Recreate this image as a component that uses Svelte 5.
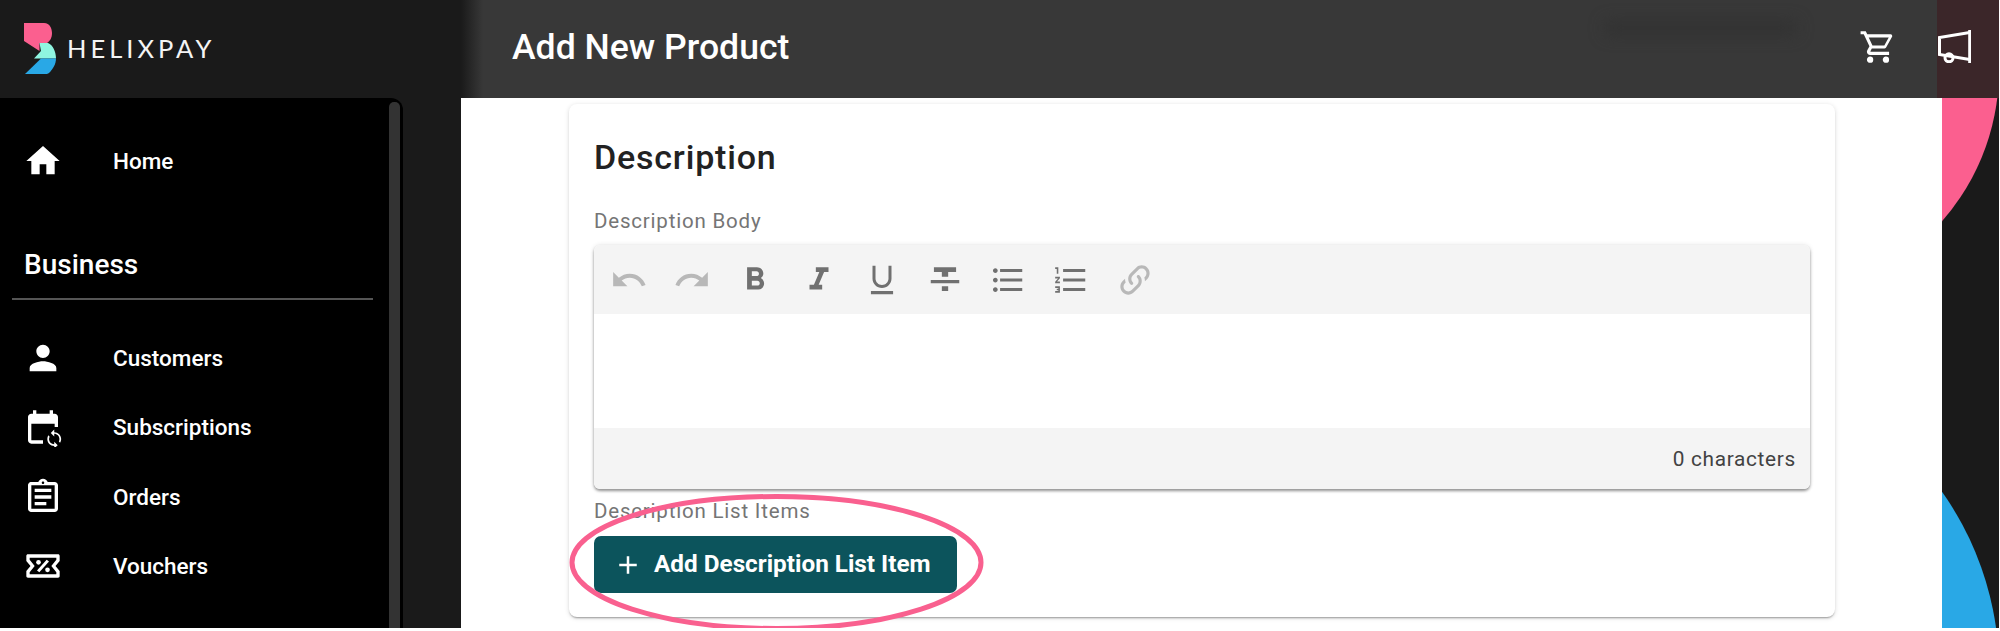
<script>
  const navTop = [{ label: 'Home', path: 'M10 20v-6h4v6h5v-8h3L12 3 2 12h3v8z' }];

  const navBusiness = [
    { label: 'Customers', kind: 'person' },
    { label: 'Subscriptions', kind: 'repeat' },
    { label: 'Orders', kind: 'orders' },
    { label: 'Vouchers', kind: 'voucher' }
  ];

  const tools = [
    { name: 'undo', off: true, d: 'M12.5 8c-2.65 0-5.05.99-6.9 2.6L2 7v9h9l-3.62-3.62c1.39-1.16 3.16-1.88 5.12-1.88 3.54 0 6.55 2.31 7.6 5.5l2.37-.78C21.08 11.03 17.15 8 12.5 8z' },
    { name: 'redo', off: true, d: 'M18.4 10.6C16.55 8.99 14.15 8 11.5 8c-4.65 0-8.58 3.03-9.96 7.22L3.9 16c1.05-3.19 4.05-5.5 7.6-5.5 1.95 0 3.73.72 5.12 1.88L13 16h9V7l-3.6 3.6z' },
    { name: 'bold', d: 'M15.6 10.79c.97-.67 1.65-1.77 1.65-2.79 0-2.26-1.75-4-4-4H7v14h7.04c2.09 0 3.71-1.7 3.71-3.79 0-1.52-.86-2.82-2.15-3.42zM10 6.5h3c.83 0 1.5.67 1.5 1.5s-.67 1.5-1.5 1.5h-3v-3zm3.5 9H10v-3h3.5c.83 0 1.5.67 1.5 1.5s-.67 1.5-1.5 1.5z' },
    { name: 'italic', d: 'M10 4v3h2.21l-3.42 8H6v3h8v-3h-2.21l3.42-8H18V4z' },
    { name: 'underline', d: 'M12 17c3.31 0 6-2.69 6-6V3h-1.900v8c0 2.260-1.840 4.100-4.100 4.100S7.900 13.260 7.900 11V3H6v8c0 3.310 2.690 6 6 6zm-7 2v2h14v-2H5z' },
    { name: 'strike', d: 'M10 19h4v-3h-4v3zM5 4v3h5v3h4V7h5V4H5zM3 14h18v-2H3v2z' },
    { name: 'bullets', d: 'M4 10.5c-.83 0-1.5.67-1.5 1.5s.67 1.5 1.5 1.5 1.5-.67 1.5-1.5-.67-1.5-1.5-1.5zm0-6c-.83 0-1.5.67-1.5 1.5S3.17 7.5 4 7.5 5.5 6.83 5.5 6 4.83 4.5 4 4.5zm0 12c-.83 0-1.5.68-1.5 1.5s.68 1.5 1.5 1.5 1.5-.68 1.5-1.5-.67-1.5-1.5-1.5zM7 19h14v-2H7v2zm0-6h14v-2H7v2zm0-8v2h14V5H7z' },
    { name: 'numbers', d: 'M2 17h2v.5H3v1h1v.5H2v1h3v-4H2v1zm1-9h1V4H2v1h1v3zm-1 3h1.8L2 13.1v.9h3v-1H3.2L5 10.9V10H2v1zm5-6v2h14V5H7zm0 14h14v-2H7v2zm0-6h14v-2H7v2z' },
    { name: 'link', off: true, d: 'M10.59,13.41C11,13.8 11,14.44 10.59,14.83C10.2,15.22 9.56,15.22 9.17,14.83C7.22,12.88 7.22,9.71 9.17,7.76V7.76L12.71,4.22C14.66,2.27 17.83,2.27 19.78,4.22C21.73,6.17 21.73,9.34 19.78,11.29L18.29,12.78C18.3,11.96 18.17,11.14 17.89,10.36L18.36,9.88C19.54,8.71 19.54,6.81 18.36,5.64C17.19,4.46 15.29,4.46 14.12,5.64L10.59,9.17C9.41,10.34 9.41,12.24 10.59,13.41M13.41,9.17C13.8,8.78 14.44,8.78 14.83,9.17C16.78,11.12 16.78,14.29 14.83,16.24V16.24L11.29,19.78C9.34,21.73 6.17,21.73 4.22,19.78C2.27,17.83 2.27,14.66 4.22,12.71L5.71,11.22C5.7,12.04 5.83,12.86 6.11,13.65L5.64,14.12C4.46,15.29 4.46,17.19 5.64,18.36C6.81,19.54 8.71,19.54 9.88,18.36L13.41,14.83C14.59,13.66 14.59,11.76 13.41,10.59C13,10.2 13,9.56 13.41,9.17Z' }
  ];
</script>

<div class="page">
  <aside class="sidebar">
    <div class="brand">
      <svg class="logo" viewBox="24 22 32 51" width="32" height="51" aria-hidden="true">
        <path fill="#fb5f8f" d="M24 22H44C50 22 52 28 52 32C52 37 50 40 47 42H39.5V50L24 40Z" />
        <path fill="#8ff5e0" d="M39.5 42H48C53 44 56 51 56 57.500H34L41 50Z" />
        <path fill="#29a8e6" d="M41 57.500H56C56 63 53 68 49 72C48 73 46 73 44 73H25Z" />
      </svg>
      <span class="wordmark">HELIXPAY</span>
    </div>

    <nav class="nav">
      <div class="nav-scroll">
        {#each navTop as item}
          <a class="nav-item home" href="#home">
            <svg class="nav-icon" viewBox="0 0 24 24"><path d={item.path} /></svg>
            <span>{item.label}</span>
          </a>
        {/each}

        <h2 class="section">Business</h2>

        {#each navBusiness as item}
          <a class="nav-item" href="#item">
            <svg class="nav-icon" viewBox="0 0 24 24">
              {#if item.kind === 'person'}
                <path d="M12 12c2.210 0 4-1.790 4-4s-1.790-4-4-4-4 1.790-4 4 1.790 4 4 4zm0 2c-2.670 0-8 1.340-8 4v2h16v-2c0-2.660-5.330-4-8-4z" />
              {:else if item.kind === 'repeat'}
                <path d="M21 12V6c0-1.100-.9-2-2-2h-1V2h-2v2H8V2H6v2H5c-1.100 0-2 .9-2 2v14c0 1.100.9 2 2 2h7v-2H5V10h14v2h2z" />
                <path transform="translate(12.500 13) scale(.52)" d="M12 4V1L8 5l4 4V6c3.310 0 6 2.690 6 6 0 1.010-.25 1.970-.7 2.800l1.460 1.460C19.540 15.030 20 13.570 20 12c0-4.420-3.580-8-8-8zm0 14c-3.310 0-6-2.690-6-6 0-1.010.25-1.970.7-2.800L5.240 7.740C4.460 8.970 4 10.430 4 12c0 4.420 3.580 8 8 8v3l4-4-4-4v3z" />
              {:else if item.kind === 'orders'}
                <path d="M19 3h-4.180C14.400 1.840 13.300 1 12 1c-1.300 0-2.400.84-2.820 2H5c-.14 0-.27.01-.4.04-.39.08-.74.28-1.010.55-.18.18-.33.4-.43.64-.1.23-.16.49-.16.77v14c0 .27.06.54.16.78s.25.45.43.64c.27.27.62.47 1.010.55.13.02.26.03.4.03h14c1.100 0 2-.9 2-2V5c0-1.100-.9-2-2-2zm-7-.25c.41 0 .75.34.75.75s-.34.75-.75.75-.75-.34-.75-.75.34-.75.75-.75zM19 19H5V5h14v14zM7 15h7v2H7zm0-4h10v2H7zm0-4h10v2H7z" />
              {:else}
                <path fill-rule="evenodd" d="M3 5h18c.6 0 1 .4 1 1v3l-2.500 3 2.500 3v3c0 .6-.4 1-1 1H3c-.6 0-1-.4-1-1v-3l2.500-3L2 9V6c0-.6.4-1 1-1zm1 2v1.300L7 12l-3 3.700V17h16v-1.300L17 12l3-3.700V7z" />
                <path d="M14.200 8.200l1.400 1.100-5.800 6.500-1.400-1.100z" />
                <circle cx="9.300" cy="9.800" r="1.400" />
                <circle cx="14.700" cy="14.300" r="1.400" />
              {/if}
            </svg>
            <span>{item.label}</span>
          </a>
        {/each}
      </div>
      <div class="scrollbar"></div>
    </nav>
  </aside>

  <div class="main">
    <header class="topbar">
      <h1>Add New Product</h1>
      <div class="smudge"></div>
      <div class="top-actions">
        <svg class="top-icon" viewBox="0 0 24 24"><path d="M17,18A2,2 0 0,1 19,20A2,2 0 0,1 17,22C15.890,22 15,21.100 15,20C15,18.890 15.890,18 17,18M1,2H4.270L5.210,4H20A1,1 0 0,1 21,5C21,5.170 20.950,5.340 20.880,5.500L17.300,11.970C16.960,12.580 16.300,13 15.550,13H8.100L7.200,14.630L7.170,14.750A0.250,0.250 0 0,0 7.420,15H19V17H7C5.890,17 5,16.100 5,15C5,14.650 5.090,14.320 5.240,14.040L6.600,11.590L3,4H1V2M7,18A2,2 0 0,1 9,20A2,2 0 0,1 7,22C5.890,22 5,21.100 5,20C5,18.890 5.890,18 7,18M16,11L18.780,6H6.140L8.500,11H16Z" /></svg>
        <svg class="top-icon horn" viewBox="0 0 34 33" fill="none" stroke="#fff" stroke-width="3">
          <path d="M32.700 0V33" />
          <path d="M32.700 2.500L2.500 7.500V24.500L32.700 29.500" />
          <circle cx="12" cy="27.800" r="4" />
        </svg>
      </div>
      <div class="top-tint"></div>
    </header>

    <div class="body">
      <main class="content">
        <section class="card">
          <h2 class="card-title">Description</h2>
          <div class="label">Description Body</div>

          <div class="editor">
            <div class="toolbar">
              {#each tools as tool}
                <span class="tool" class:off={tool.off} title={tool.name}>
                  <svg viewBox="0 0 24 24"><path d={tool.d} /></svg>
                </span>
              {/each}
            </div>
            <div class="editor-body"></div>
            <div class="editor-foot">0 characters</div>
          </div>

          <div class="label list-label">Description List Items</div>
          <button class="add-btn" type="button">
            <svg viewBox="0 0 24 24"><path d="M19 13h-6v6h-2v-6H5v-2h6V5h2v6h6v2z" /></svg>
            <span>Add Description List Item</span>
          </button>
        </section>

        <svg class="ring" viewBox="0 0 420 137" width="420" height="137" aria-hidden="true">
          <ellipse cx="209.500" cy="68.500" rx="204.500" ry="66" fill="none" stroke="#f9608f" stroke-width="5" />
        </svg>
      </main>

      <div class="strip">
        <div class="blob pink"></div>
        <div class="blob blue"></div>
      </div>
    </div>
  </div>
</div>

<style>
  :global(body) {
    margin: 0;
    background: #fff;
  }

  .page {
    display: grid;
    grid-template-columns: 461px 1fr;
    width: 1999px;
    height: 628px;
    font-family: Roboto, 'Liberation Sans', sans-serif;
  }

  .sidebar {
    display: flex;
    flex-direction: column;
    background: #1a1a1a;
    min-height: 0;
    overflow: hidden;
  }

  .brand {
    height: 98px;
    flex: none;
    display: flex;
    align-items: center;
    padding-left: 24px;
    box-sizing: border-box;
  }

  .logo {
    margin-top: -1px;
  }

  .wordmark {
    margin-left: 11px;
    margin-top: -2px;
    font-family: Lato, 'Open Sans', sans-serif;
    font-weight: 400;
    font-size: 25.500px;
    letter-spacing: 4px;
    color: #f4f4f4;
  }

  .nav {
    flex: 1;
    width: 403px;
    background: #000;
    border-top-right-radius: 12px;
    position: relative;
    min-height: 0;
  }

  .nav-scroll {
    padding-top: 28px;
  }

  .scrollbar {
    position: absolute;
    top: 4px;
    bottom: 0;
    left: 389px;
    width: 11px;
    background: #333;
    border-radius: 5px 5px 0 0;
  }

  .nav-item {
    display: flex;
    align-items: center;
    height: 69.500px;
    color: #fff;
    text-decoration: none;
    font-size: 22.500px;
    font-weight: 500;
  }

  .nav-item.home {
    height: 70px;
  }

  .nav-icon {
    width: 40px;
    height: 40px;
    margin-left: 23px;
    margin-right: 50px;
    fill: #fff;
  }

  .section {
    margin: 0 0 23px 12px;
    width: 361px;
    padding: 0 0 17.500px 12px;
    box-sizing: border-box;
    height: 104px;
    display: flex;
    align-items: flex-end;
    border-bottom: 2px solid #555;
    color: #fff;
    font-size: 28px;
    font-weight: 500;
  }

  .main {
    display: flex;
    flex-direction: column;
    min-height: 0;
  }

  .topbar {
    height: 98px;
    flex: none;
    background: linear-gradient(90deg, #1a1a1a 0, #383838 22px);
    display: flex;
    align-items: center;
    padding-left: 51px;
    position: relative;
    box-sizing: border-box;
  }

  .topbar h1 {
    margin: 0 0 4px;
    color: #fff;
    font-size: 35.600px;
    font-weight: 500;
  }

  .smudge {
    position: absolute;
    left: 1145px;
    top: 22px;
    width: 190px;
    height: 12px;
    background: #303030;
    filter: blur(8px);
  }

  .top-actions {
    position: absolute;
    left: 1398px;
    top: 28px;
    display: flex;
    align-items: flex-start;
    gap: 40px;
    z-index: 1;
  }

  .top-icon {
    width: 38px;
    height: 38px;
    fill: #fff;
  }

  .top-icon.horn {
    width: 34px;
    height: 33px;
    margin-top: 2px;
    fill: none;
  }

  .top-tint {
    position: absolute;
    left: 1476px;
    right: 0;
    top: 0;
    bottom: 0;
    background: #3b2629;
  }

  .body {
    flex: 1;
    display: flex;
    min-height: 0;
  }

  .content {
    flex: 1;
    background: #fff;
    padding: 6px 107px 0 108px;
    position: relative;
    min-width: 0;
  }

  .card {
    background: #fff;
    height: 513px;
    box-sizing: border-box;
    padding: 0 25px;
    border-radius: 8px;
    display: flex;
    flex-direction: column;
    box-shadow: 0 2px 2px -1px rgba(0, 0, 0, 0.35), 0 1px 5px 0 rgba(0, 0, 0, 0.14);
  }

  .card-title {
    margin: 29px 0 0;
    height: 48px;
    line-height: 48px;
    font-size: 34px;
    font-weight: 500;
    letter-spacing: 0.8px;
    color: #222;
  }

  .label {
    color: #757575;
    font-size: 20.500px;
    letter-spacing: 0.8px;
    line-height: 24px;
  }

  .card-title + .label {
    margin-top: 28px;
  }

  .editor {
    margin-top: 12px;
    height: 244px;
    flex: none;
    display: flex;
    flex-direction: column;
    border-radius: 6px;
    box-shadow: 0 2px 3px rgba(0, 0, 0, 0.4), 0 0 5px rgba(0, 0, 0, 0.1);
    overflow: hidden;
    background: #fff;
  }

  .toolbar {
    height: 69px;
    flex: none;
    display: flex;
    align-items: center;
    padding-left: 16px;
    gap: 25.200px;
    background: #f4f4f4;
  }

  .tool {
    display: flex;
    width: 38px;
    height: 38px;
  }

  .tool svg {
    width: 38px;
    height: 38px;
    fill: #707070;
  }

  .tool.off svg {
    fill: #b8b8b8;
  }

  .editor-body {
    flex: 1;
  }

  .editor-foot {
    height: 61px;
    flex: none;
    display: flex;
    align-items: center;
    justify-content: flex-end;
    padding-right: 14px;
    background: #f4f4f4;
    color: #424242;
    font-size: 20.800px;
    letter-spacing: 0.7px;
  }

  .list-label {
    margin-top: 10px;
  }

  .add-btn {
    margin-top: 13px;
    width: 363px;
    height: 57px;
    border: 0;
    border-radius: 7px;
    background: #0c545c;
    color: #fff;
    display: flex;
    align-items: center;
    padding: 0 0 0 19px;
    font-family: inherit;
    font-size: 24.300px;
    font-weight: 700;
    white-space: nowrap;
  }

  .add-btn span {
    margin-top: -2px;
  }

  .add-btn svg {
    width: 30px;
    height: 30px;
    margin-right: 11px;
    fill: #fff;
    flex: none;
  }

  .ring {
    position: absolute;
    left: 106px;
    top: 396px;
    pointer-events: none;
    overflow: visible;
  }

  .strip {
    width: 57px;
    flex: none;
    position: relative;
    overflow: hidden;
    background: #1a1a1a;
  }

  .blob {
    position: absolute;
    border-radius: 50%;
  }

  .pink {
    background: #fb5f8f;
    width: 458px;
    height: 458px;
    left: -401px;
    top: -257px;
  }

  .blue {
    background: #29a8e6;
    width: 617px;
    height: 617px;
    left: -560px;
    top: 264px;
  }
</style>
